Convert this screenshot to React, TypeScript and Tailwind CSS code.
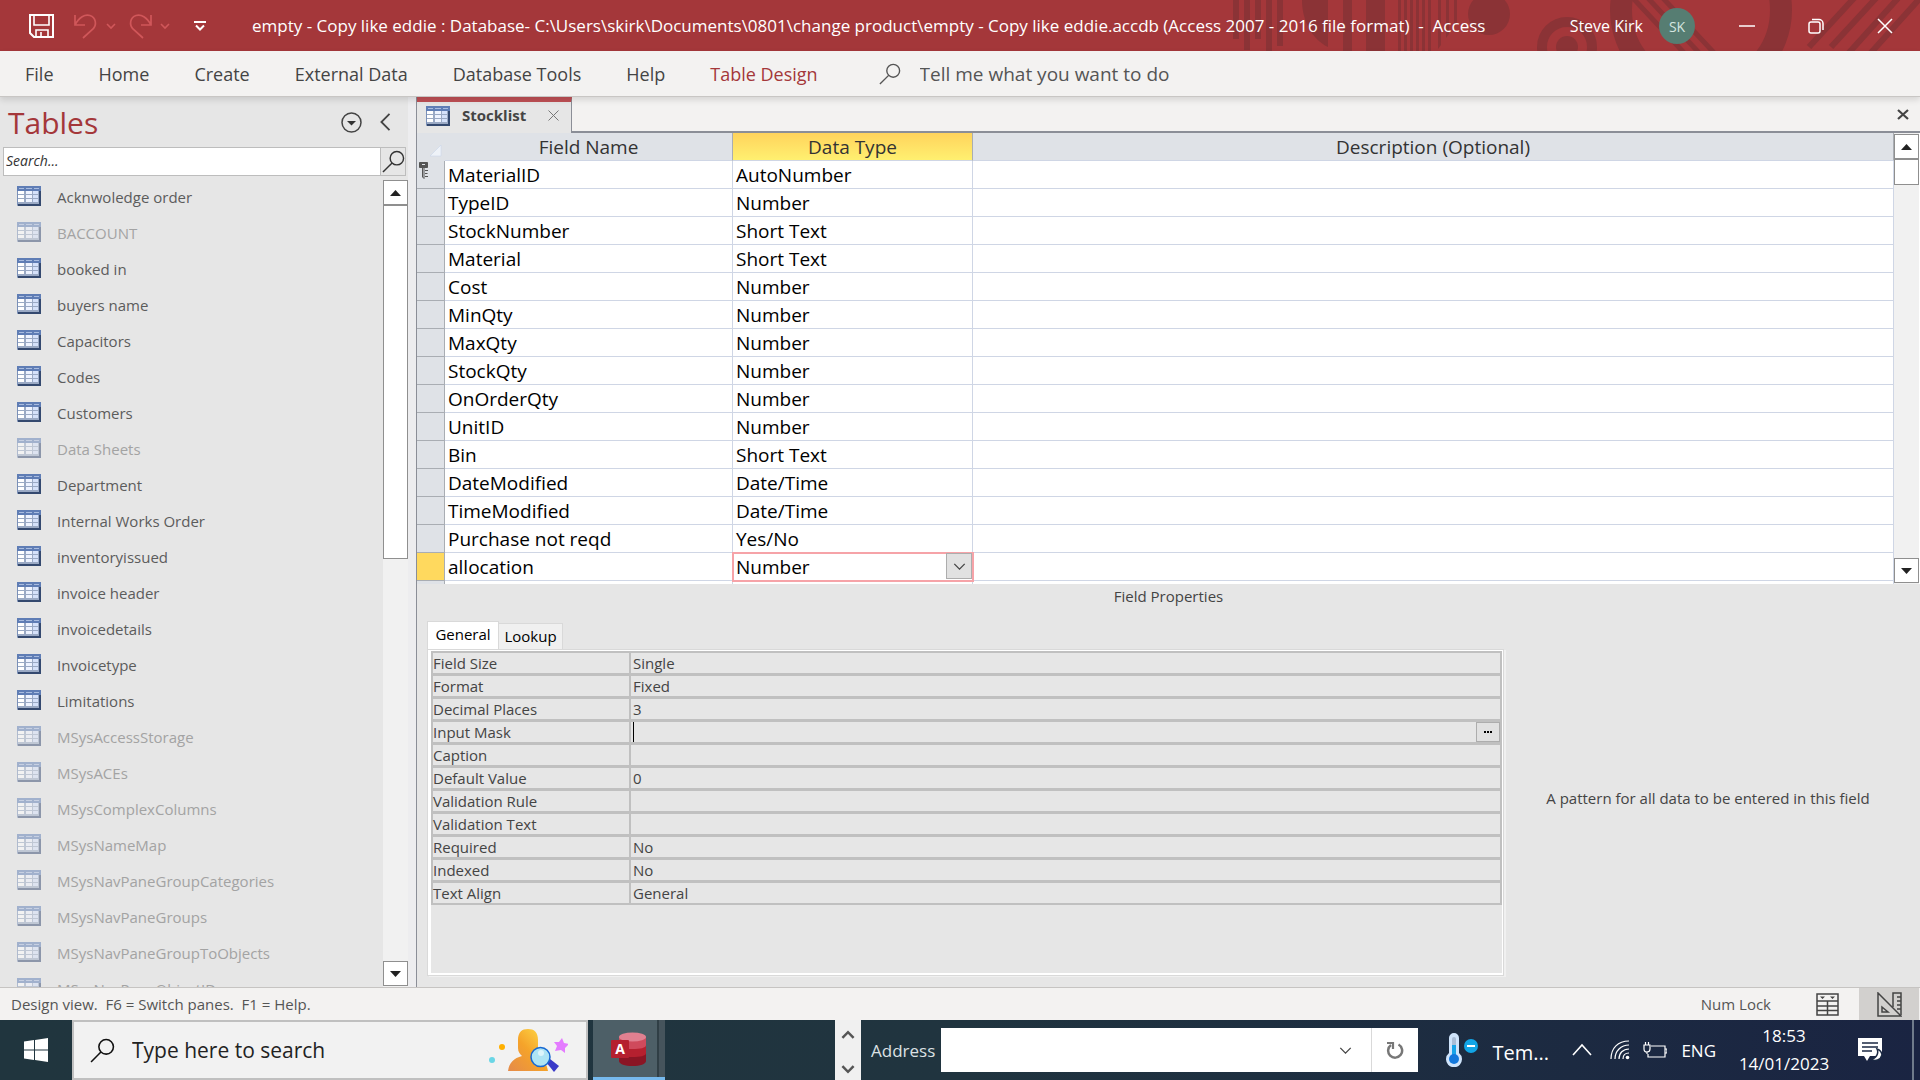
import React from 'react';

const menuItems = ['File', 'Home', 'Create', 'External Data', 'Database Tools', 'Help'];

const tables = [
  { name: 'Acknwoledge order', hidden: false },
  { name: 'BACCOUNT', hidden: true },
  { name: 'booked in', hidden: false },
  { name: 'buyers name', hidden: false },
  { name: 'Capacitors', hidden: false },
  { name: 'Codes', hidden: false },
  { name: 'Customers', hidden: false },
  { name: 'Data Sheets', hidden: true },
  { name: 'Department', hidden: false },
  { name: 'Internal Works Order', hidden: false },
  { name: 'inventoryissued', hidden: false },
  { name: 'invoice header', hidden: false },
  { name: 'invoicedetails', hidden: false },
  { name: 'Invoicetype', hidden: false },
  { name: 'Limitations', hidden: false },
  { name: 'MSysAccessStorage', hidden: true },
  { name: 'MSysACEs', hidden: true },
  { name: 'MSysComplexColumns', hidden: true },
  { name: 'MSysNameMap', hidden: true },
  { name: 'MSysNavPaneGroupCategories', hidden: true },
  { name: 'MSysNavPaneGroups', hidden: true },
  { name: 'MSysNavPaneGroupToObjects', hidden: true },
  { name: 'MSysNavPaneObjectIDs', hidden: true },
];

const fields = [
  ['MaterialID', 'AutoNumber'],
  ['TypeID', 'Number'],
  ['StockNumber', 'Short Text'],
  ['Material', 'Short Text'],
  ['Cost', 'Number'],
  ['MinQty', 'Number'],
  ['MaxQty', 'Number'],
  ['StockQty', 'Number'],
  ['OnOrderQty', 'Number'],
  ['UnitID', 'Number'],
  ['Bin', 'Short Text'],
  ['DateModified', 'Date/Time'],
  ['TimeModified', 'Date/Time'],
  ['Purchase not reqd', 'Yes/No'],
];

const properties = [
  ['Field Size', 'Single'],
  ['Format', 'Fixed'],
  ['Decimal Places', '3'],
  ['Input Mask', ''],
  ['Caption', ''],
  ['Default Value', '0'],
  ['Validation Rule', ''],
  ['Validation Text', ''],
  ['Required', 'No'],
  ['Indexed', 'No'],
  ['Text Align', 'General'],
];

const TableIcon: React.FC<{ faded?: boolean }> = ({ faded }) => (
  <svg width="24" height="20" viewBox="0 0 24 20" className={faded ? 'shrink-0 opacity-50' : 'shrink-0'} shapeRendering="crispEdges">
    <rect width="24" height="20" fill="#9aa9c4" />
    <rect width="24" height="5" fill="#5f7db5" />
    <path d="M2 2.500h5M9 2.500h6M17 2.500h5" stroke="#a9bcdf" />
    <path d="M1 6.500h6M1 10.500h6M1 14.500h6" stroke="#fff" strokeWidth="3" />
    <path d="M9 6.500h6M9 10.500h6M9 14.500h6" stroke="#eef3ff" strokeWidth="3" />
    <path d="M16 6.500h5M16 10.500h5M16 14.500h5" stroke="#d5e1fa" strokeWidth="3" />
    <path d="M23 5v15M1 19h23" stroke="#34496f" strokeWidth="2" />
    <path d="M0.500 5v14" stroke="#7a90b8" />
  </svg>
);

const Magnifier: React.FC<{ size: number; stroke: string; width?: number }> = ({ size, stroke, width = 1.5 }) => (
  <svg width={size} height={size} viewBox="0 0 24 24" fill="none" stroke={stroke} strokeWidth={width} className="shrink-0">
    <circle cx="15.500" cy="8.500" r="7" />
    <path d="M10.500 13.500 1 23" />
  </svg>
);

const Chevron: React.FC<{ size: number; stroke: string; d?: string; width?: number }> = ({
  size,
  stroke,
  d = 'M1 3l4 4 4-4',
  width = 1,
}) => (
  <svg width={size} height={size} viewBox="0 0 10 10" fill="none" stroke={stroke} strokeWidth={width} className="shrink-0">
    <path d={d} />
  </svg>
);

const ScrollButton: React.FC<{ dir: 'up' | 'down' }> = ({ dir }) => (
  <button
    type="button"
    aria-label={`Scroll ${dir}`}
    className="flex h-[25px] w-[25px] shrink-0 items-center justify-center border border-[#8f8f8f] bg-white"
  >
    <svg width="11" height="6" viewBox="0 0 11 6" fill="#222">
      <path d={dir === 'up' ? 'M5.500 0 11 6H0z' : 'M0 0h11L5.500 6z'} />
    </svg>
  </button>
);

const TitlePattern = () => (
  <svg width="690" height="51" viewBox="1230 0 690 51" className="absolute right-0 top-0" fill="none">
    <g fill="#8b3336">
      <path d="M1233 0h6v39h-6zM1244 0h6v50h-6zM1255 0h6v39h-6zM1266 0h6v51h-6zM1277 0h6v46h-6z" />
      <path d="M1302 0h26v47c-16-8-26-26-26-47zM1343 0h9v51h-9zM1366 0h19v51h-19z" />
      <path d="M1398 0h3v51h-3zM1404 0h3v51h-3zM1410 0h3v51h-3zM1416 0h3v51h-3zM1422 0h3v51h-3zM1428 0h3v51h-3zM1438 0h3v45l-3 4zM1446 0h3v34l-3 4zM1454 0h3v22l-3 6z" />
      <circle cx="1489" cy="14" r="21" />
      <circle cx="1567" cy="47" r="11" />
    </g>
    <g stroke="#8b3336">
      <circle cx="1567" cy="47" r="25" strokeWidth="10" />
      <circle cx="1701" cy="10" r="80" strokeWidth="22" />
      <path d="M1631-4l56 60M1646-4l56 60M1661-4l56 60" strokeWidth="5" />
      <path d="M1856-4l-47 51M1878-4l-47 51M1900-4l-54 60M1922-4l-54 60" strokeWidth="6" />
    </g>
  </svg>
);

const TitleBar = () => (
  <header className="relative flex h-[51px] shrink-0 items-center bg-[#a4373a] text-white">
    <TitlePattern />
    <div className="relative flex w-full items-center pt-px">
      <div className="flex w-[252px] shrink-0 items-center pl-[29px]">
        <button type="button" aria-label="Save">
          <svg width="25" height="26" viewBox="0 0 25 26" fill="none" stroke="#fff" strokeWidth="2">
            <path d="M1 2h23v22H5l-4-4z" />
            <path d="M5 2v10h15V2M7 24v-7h12v7M12 19v5" strokeWidth="1.600" />
          </svg>
        </button>
        <button type="button" aria-label="Undo" className="ml-5 flex items-center gap-2">
          <svg width="24" height="26" viewBox="0 0 24 26" fill="none" stroke="#d0575a" strokeWidth="1.700">
            <path d="M1 2v10h10M1 12C5 4 11 1 16 2.500c6 2 7 9 3 13.500L9 25" />
          </svg>
          <Chevron size={10} stroke="#d0575a" width={1.6} />
        </button>
        <button type="button" aria-label="Redo" className="ml-3 flex items-center gap-2">
          <svg width="24" height="26" viewBox="0 0 24 26" fill="none" stroke="#d0575a" strokeWidth="1.700">
            <path d="M23 2v10H13M23 12C19 4 13 1 8 2.500c-6 2-7 9-3 13.500L15 25" />
          </svg>
          <Chevron size={10} stroke="#d0575a" width={1.6} />
        </button>
        <button type="button" aria-label="Customize Quick Access Toolbar" className="ml-6">
          <svg width="12" height="10" viewBox="0 0 12 10" fill="none" stroke="#fff" strokeWidth="2">
            <path d="M0 1h12M2 4.500l4 4 4-4" />
          </svg>
        </button>
      </div>
      <h1 className="whitespace-pre text-[17px]">
        empty - Copy like eddie : Database- C:\Users\skirk\Documents\0801\change product\empty - Copy like eddie.accdb (Access 2007 - 2016 file format)  -  Access
      </h1>
      <div className="ml-auto flex items-center">
        <span className="text-[16px]">Steve Kirk</span>
        <span className="ml-4 flex h-9 w-9 items-center justify-center rounded-full bg-[#567d72] text-[14px] text-[#d5e6e0]">SK</span>
        <button type="button" aria-label="Minimize" className="ml-11">
          <svg width="16" height="16" stroke="#fff" strokeWidth="1.500"><path d="M0 8h16" /></svg>
        </button>
        <button type="button" aria-label="Restore" className="ml-[53px]">
          <svg width="16" height="16" fill="none" stroke="#fff" strokeWidth="1.500">
            <rect x="1" y="4" width="11" height="11" rx="2" />
            <path d="M4 1.500h7a4 4 0 0 1 4 4V12" />
          </svg>
        </button>
        <button type="button" aria-label="Close" className="ml-[53px] mr-[27px]">
          <svg width="16" height="16" stroke="#fff" strokeWidth="1.500"><path d="M1 1l14 14M15 1 1 15" /></svg>
        </button>
      </div>
    </div>
  </header>
);

const Ribbon = () => (
  <nav className="relative z-10 flex h-[46px] shrink-0 items-center gap-[45px] border-b border-[#c8c6c4] bg-[#f3f2f1] pl-[25px] pt-[2px] text-[18px] text-[#444] shadow-[0_3px_6px_rgba(0,0,0,0.12)]">
    {menuItems.map((item) => (
      <button type="button" key={item}>{item}</button>
    ))}
    <button type="button" className="text-[#a4373a]">Table Design</button>
    <label className="ml-4 flex items-center gap-[19px] pb-px">
      <Magnifier size={22} stroke="#555" />
      <input
        type="text"
        aria-label="Tell me what you want to do"
        placeholder="Tell me what you want to do"
        className="w-[300px] bg-transparent text-[19px] outline-none placeholder:text-[#555]"
      />
    </label>
  </nav>
);

const NavPane = () => (
  <aside className="flex w-[416px] shrink-0 flex-col bg-[#e6e6e6] pr-2 shadow-[inset_-8px_0_0_#ededef]">
    <div className="flex h-[50px] shrink-0 items-center pl-2">
      <h2 className="text-[30px] text-[#a4373a]">Tables</h2>
      <button type="button" aria-label="Choose category" className="ml-auto">
        <svg width="21" height="21" viewBox="0 0 21 21" fill="none" stroke="#444">
          <circle cx="10.500" cy="10.500" r="9.500" strokeWidth="1.500" />
          <path d="M6 9h9l-4.500 4.500z" fill="#333" stroke="none" />
        </svg>
      </button>
      <button type="button" aria-label="Collapse pane" className="ml-[14px] mr-[14px]">
        <Chevron size={18} stroke="#444" d="M7.500 0.500 3 5l4.500 4.500" />
      </button>
    </div>
    <div className="ml-[3px] mr-[2px] flex h-[29px] shrink-0 border border-[#bdbdbd]">
      <input
        type="search"
        aria-label="Search tables"
        placeholder="Search..."
        className="min-w-0 flex-1 bg-white pb-[2px] pl-[2px] text-[14px] italic outline-none placeholder:text-[#333]"
      />
      <button type="button" aria-label="Search" className="flex w-[25px] items-center justify-center border-l border-[#bdbdbd]">
        <Magnifier size={23} stroke="#333" />
      </button>
    </div>
    <div className="mt-1 flex min-h-0 flex-1 overflow-hidden">
      <ul className="min-w-0 flex-1 overflow-hidden">
        {tables.map((t) => (
          <li key={t.name} className="h-9">
            <a href="#" className={`flex h-8 items-center gap-4 pl-[17px] text-[15px] ${t.hidden ? 'text-[#a3a3a3]' : 'text-[#5c5c5c]'}`}>
              <TableIcon faded={t.hidden} />
              <span className="pt-[2px]">{t.name}</span>
            </a>
          </li>
        ))}
      </ul>
      <div className="flex w-[25px] flex-col bg-[#f1f1f1] pb-px">
        <ScrollButton dir="up" />
        <div className="h-[354px] border border-[#8f8f8f] bg-white" />
        <div className="flex-1" />
        <ScrollButton dir="down" />
      </div>
    </div>
  </aside>
);

const selectorCell = 'border-b border-r border-[#a9adb3] bg-[#dfe2e7] p-0';
const gridCell = 'h-7 border-b border-r border-[#cfd6e5] px-[3px] py-0';
const headCell = 'h-7 border-b border-r border-b-[#cfd6e5] border-r-[#a9adb3] p-0 font-normal text-[#333]';

const DesignGrid = () => (
  <div className="flex shrink-0 bg-white">
    <table className="min-w-0 flex-1 table-fixed border-separate border-spacing-0 text-[19px] leading-6 text-black">
      <colgroup>
        <col className="w-7" />
        <col className="w-[288px]" />
        <col className="w-[240px]" />
        <col />
      </colgroup>
      <thead>
        <tr className="bg-[#dfe2e7]">
          <th className="p-0">
            <svg width="12" height="12" viewBox="0 0 12 12" className="ml-[13px] mt-2"><path d="M11 0v11H0z" fill="#eef2f8" stroke="#c5d3e8" strokeWidth="0.500" /></svg>
          </th>
          <th className={headCell}>Field Name</th>
          <th className={`${headCell} bg-linear-to-b from-[#ffd35c] to-[#fff070]`}>Data Type</th>
          <th className={headCell}>Description (Optional)</th>
        </tr>
      </thead>
      <tbody>
        {fields.map(([name, type], i) => (
          <tr key={name}>
            <td className={selectorCell}>
              {i === 0 && (
                <svg width="10" height="17" viewBox="0 0 10 17" className="mb-2 ml-[2px]" fill="none" stroke="#555">
                  <path d="M0.500 0.500h8v5h-8z" fill="#555" />
                  <path d="M3 2.500h3" stroke="#dfe2e7" />
                  <path d="M3.500 6v9l1.500 1.500V6M6 8.500h3M6 11.500h2.500M6 14.500h3" />
                </svg>
              )}
            </td>
            <td className={gridCell}>{name}</td>
            <td className={gridCell}>{type}</td>
            <td className={gridCell} />
          </tr>
        ))}
        <tr>
          <td className="border-b border-r border-[#a9adb3] bg-[#ffd95e] p-0" />
          <td className={gridCell}>allocation</td>
          <td className={`${gridCell} relative outline-2 -outline-offset-1 outline-[#f6a3a8]`}>
            <select aria-label="Data type for allocation" className="block h-[26px] w-full appearance-none bg-transparent outline-none">
              <option>Number</option>
            </select>
            <span className="pointer-events-none absolute right-0 top-0 flex h-[26px] w-[26px] items-center justify-center border border-[#adadad] bg-[#e1e1e1]">
              <Chevron size={13} stroke="#444" />
            </span>
          </td>
          <td className={gridCell} />
        </tr>
        <tr className="h-[3px]">
          <td className="border-r border-[#a9adb3] bg-[#dfe2e7] p-0" />
          <td className="border-r border-[#cfd6e5] p-0" />
          <td className="border-r border-[#cfd6e5] p-0" />
          <td className="border-r border-[#cfd6e5] p-0" />
        </tr>
      </tbody>
    </table>
    <div className="mr-px flex w-[25px] shrink-0 flex-col bg-[#f1f1f1] py-px">
      <ScrollButton dir="up" />
      <div className="h-[26px] border border-[#8f8f8f] bg-white" />
      <div className="flex-1" />
      <ScrollButton dir="down" />
    </div>
  </div>
);

const FieldProperties = () => (
  <section className="flex min-h-0 flex-1 flex-col bg-[#e6e6e6] text-[15px] text-[#444]">
    <h3 className="h-[37px] text-center leading-6">Field Properties</h3>
    <div className="flex min-h-0 flex-1 pb-[11px] pl-[10px]">
      <div className="flex min-w-0 flex-1 flex-col">
        <div role="tablist" className="flex h-7 items-end text-black">
          <button type="button" role="tab" aria-selected="true" className="h-7 w-[72px] border-x border-t border-[#d9d9d9] bg-white pb-[2px]">General</button>
          <button type="button" role="tab" aria-selected="false" className="h-[26px] w-16 border-r border-t border-[#d9d9d9] bg-[#f0f0f0]">Lookup</button>
        </div>
        <div className="flex-1 border border-[#d9d9d9] bg-white pb-[2px] pl-[3px] pr-px pt-px shadow-[2px_1px_0_#f0f0f0]">
          <div className="h-full bg-[#e6e6e6]">
            <div className="grid grid-cols-[196px_1fr] gap-x-[2px] gap-y-[3px] bg-[#c0c0c0] p-[2px]">
              {properties.map(([label, value]) => (
                <React.Fragment key={label}>
                  <label htmlFor={label} className="h-5 bg-[#e6e6e6] leading-5">{label}</label>
                  <div className="flex h-5 bg-[#e6e6e6] pl-[2px]">
                    <input
                      id={label}
                      defaultValue={value}
                      className={`min-w-0 flex-1 bg-transparent outline-none ${label === 'Input Mask' ? 'border-l border-black' : ''}`}
                    />
                    {label === 'Input Mask' && (
                      <button type="button" aria-label="Build" className="flex w-6 items-center justify-center border border-[#adadad] bg-[#e1e1e1]">
                        <svg width="8" height="2" fill="#000"><path d="M0 0h2v2H0zM3 0h2v2H3zM6 0h2v2H6z" /></svg>
                      </button>
                    )}
                  </div>
                </React.Fragment>
              ))}
            </div>
          </div>
        </div>
      </div>
      <p className="flex w-[416px] items-center justify-center pr-2">A pattern for all data to be entered in this field</p>
    </div>
  </section>
);

const Workspace = () => (
  <main className="flex min-w-0 flex-1 flex-col border-l border-[#8b8e97] bg-[#f3f2f1]">
    <div className="flex h-9 shrink-0 border-b-2 border-[#8b8e97]">
      <div className="-mb-[2px] flex w-[155px] items-center border-r border-t-[5px] border-r-[#8b8e97] border-t-[#bf5055] bg-[#e6e6e6] pb-1 pl-[9px]">
        <TableIcon />
        <span className="ml-3 text-[15px] font-bold text-[#444]">Stocklist</span>
        <button type="button" aria-label="Close tab" className="ml-auto mr-3">
          <svg width="11" height="11" stroke="#777"><path d="M0.500 0.500l10 10M10.500 0.500l-10 10" /></svg>
        </button>
      </div>
      <button type="button" aria-label="Close object" className="ml-auto mr-[11px]">
        <svg width="12" height="11" stroke="#444" strokeWidth="2.200"><path d="M1 1l10 9M11 1 1 10" /></svg>
      </button>
    </div>
    <DesignGrid />
    <FieldProperties />
  </main>
);

const StatusBar = () => (
  <footer className="flex h-[33px] shrink-0 items-center border-t border-[#c6c4c2] bg-[#f3f2f1] pl-[11px] text-[15px] text-[#555]">
    <span className="whitespace-pre">Design view.  F6 = Switch panes.  F1 = Help.</span>
    <span className="ml-auto">Num Lock</span>
    <button type="button" aria-label="Datasheet view" className="ml-[45px]">
      <svg width="23" height="23" viewBox="0 0 23 23" fill="none" stroke="#444" strokeWidth="1.500">
        <path d="M1 1h21v21H1zM1 8h21M1 13h21M1 17.500h21M11.500 8v14" />
        <path d="M4 3.500h5L6.500 6zM14 3.500h5L16.500 6z" fill="#444" stroke="none" />
      </svg>
    </button>
    <button type="button" aria-label="Design view" className="ml-5 mr-px flex h-8 w-[60px] items-center justify-center bg-[#d2d0ce]">
      <svg width="25" height="25" viewBox="0 0 25 25" fill="none" stroke="#444" strokeWidth="1.500">
        <path d="M1 1v23h23zM5 15v5h6z" />
        <path d="M16 15V1h8v22M20 5h4M20 9h4M20 13h4M20 17h4" />
      </svg>
    </button>
  </footer>
);

const SearchArt = () => (
  <svg width="80" height="44" viewBox="0 0 80 44" className="ml-auto mr-[18px]">
    <defs>
      <linearGradient id="person" x1="0" y1="1" x2="1" y2="0">
        <stop offset="0" stopColor="#e58a4a" />
        <stop offset="0.500" stopColor="#f5a32a" />
        <stop offset="1" stopColor="#ffe04a" />
      </linearGradient>
    </defs>
    <circle cx="14" cy="19" r="3" fill="#ffb000" />
    <circle cx="4" cy="32" r="3" fill="#6ad6e6" />
    <path d="M30 12C30 4 34 1 40 1s10 3 10 11v8c0 4-1 6-3 8 8 2 12 8 13 15H20c1-8 6-13 14-15-2-2-4-4-4-8z" fill="url(#person)" />
    <path d="M58 34l4-3 9 7-5 6z" fill="#3a3ac8" />
    <circle cx="52.500" cy="29" r="9.500" fill="#aee4f4" stroke="#1769d2" strokeWidth="1.500" />
    <circle cx="53" cy="25" r="3" fill="#dcf5fb" />
    <path d="M74 10l2 5 5 1-4 4 0 5-4-3-6 1 2-5-3-4 5 0z" fill="#e47cff" />
  </svg>
);

const AccessLogo = () => (
  <svg width="36" height="34" viewBox="0 0 36 34">
    <path d="M8 5v24c0 3 6 5 13.500 5S35 32 35 29V5z" fill="#8a1524" />
    <path d="M8 5v16c0 3 6 4 13.500 4S35 24 35 21V5z" fill="#b5202f" />
    <path d="M8 5v8c0 3 6 4 13.500 4S35 16 35 13V5z" fill="#cf4a5c" />
    <ellipse cx="21.500" cy="5" rx="13.500" ry="4.500" fill="#e08090" />
    <rect y="8" width="18" height="18" rx="1" fill="#b5202f" />
    <text x="9" y="22" textAnchor="middle" fontSize="14" fontWeight="700" fill="#fff" fontFamily="Open Sans, sans-serif">A</text>
  </svg>
);

const Taskbar = () => (
  <footer className="flex h-[60px] shrink-0 bg-linear-to-r from-[#20353e] via-[#20343f] to-[#1a2442] text-white">
    <button type="button" aria-label="Start" className="flex w-[72px] shrink-0 items-center justify-center">
      <svg width="24" height="24" viewBox="0 0 24 24" fill="#fff">
        <path d="M0 3.500l10-1.400v9.400H0zM11 2l13-2v11.500H11zM0 12.500h10v9.400L0 20.500zM11 12.500h13V24l-13-2z" />
      </svg>
    </button>
    <label className="flex w-[516px] shrink-0 items-center border-2 border-[#c0c0c0] bg-[#f2f2f2] pl-4">
      <Magnifier size={25} stroke="#111" />
      <input
        type="text"
        aria-label="Type here to search"
        placeholder="Type here to search"
        className="ml-[17px] w-[260px] bg-transparent pt-[2px] text-[21px] outline-none placeholder:text-[#222]"
      />
      <SearchArt />
    </label>
    <button
      type="button"
      aria-label="Access"
      className="ml-[5px] flex w-[72px] shrink-0 items-center justify-center border-b-[3px] border-[#76b9ed] bg-[#4d5f67] shadow-[inset_-6px_0_0_#46545c,inset_-8px_0_0_#303f46]"
    >
      <AccessLogo />
    </button>
    <div className="flex min-w-0 flex-1 pl-[170px]">
      <div className="flex w-[26px] shrink-0 flex-col items-center justify-between bg-[#f0f0f0] pb-1 pt-2">
        <button type="button" aria-label="Previous toolbar"><Chevron size={14} stroke="#555" width={1.8} d="M1 7l4-4 4 4" /></button>
        <button type="button" aria-label="Next toolbar"><Chevron size={14} stroke="#555" width={1.8} /></button>
      </div>
      <label htmlFor="address" className="self-center pl-[10px] pr-[6px] pt-px text-[17px] text-[#dce1e4]">Address</label>
      <div className="my-2 flex min-w-0 flex-1 bg-white">
        <input id="address" type="text" className="min-w-0 flex-1 px-2 text-black outline-none" />
        <button type="button" aria-label="Previous locations" className="flex w-[51px] items-center justify-center">
          <Chevron size={13} stroke="#444" />
        </button>
        <button type="button" aria-label="Refresh" className="flex w-[47px] items-center justify-center border-l border-[#d9d9d9]">
          <svg width="18" height="19" viewBox="0 0 18 19" fill="none" stroke="#777" strokeWidth="2.500">
            <path d="M12.500 3.500a7 7 0 1 1-7.500 0.500" />
            <path d="M1 2h6v6" strokeWidth="2.200" />
          </svg>
        </button>
      </div>
    </div>
    <div className="flex shrink-0 items-center pl-7">
      <svg width="32" height="34" viewBox="0 0 32 34">
        <path d="M3 5a5 5 0 0 1 10 0v15a8 8 0 1 1-10 0z" fill="#cfe4fb" />
        <path d="M6 6a2 2 0 0 1 4 0v15H6z" fill="#a9bdd6" />
        <path d="M6 12h4v10H6z" fill="#18a4e8" />
        <circle cx="8" cy="26" r="5" fill="#1378dc" />
        <circle cx="25" cy="13" r="7" fill="#12a5e6" />
        <path d="M21 13h8" stroke="#fff" strokeWidth="2" />
      </svg>
      <span className="ml-[14px] w-14 pt-[6px] text-[20px]">Tem...</span>
      <button type="button" aria-label="Show hidden icons" className="ml-6">
        <Chevron size={20} stroke="#fff" width={0.8} d="M0.500 7.500l4.500-5 4.500 5" />
      </button>
      <svg width="20" height="20" viewBox="0 0 20 20" fill="none" stroke="#fff" className="ml-[18px]" strokeWidth="1.200">
        <path d="M1 19C1 8 8 1 19 1M5 19C5 11 11 5 19 5M9 19c0-6 4-10 10-10M13 19c0-4 2-6 6-6" />
        <circle cx="17.500" cy="17.500" r="1.800" fill="#fff" stroke="none" />
      </svg>
      <svg width="24" height="17" viewBox="0 0 24 17" fill="none" stroke="#fff" className="ml-[13px]" strokeWidth="1.200">
        <path d="M8 4h14v11H5v-3M22 7h2v4h-2M1 3h6v4c0 2-1 3-3 3S1 9 1 7zM2.500 0v3M5.500 0v3M4 10v2" />
      </svg>
      <span className="ml-[14px] pt-px text-[17px]">ENG</span>
      <time className="ml-5 w-[96px] text-center text-[17px] leading-7">
        18:53
        <br />
        14/01/2023
      </time>
      <button type="button" aria-label="Notifications" className="ml-[26px]">
        <svg width="25" height="24" viewBox="0 0 25 24">
          <path d="M0 0h24v18H12l-3 5-3-5H0z" fill="#fff" />
          <path d="M4 5h16M4 9h16M4 13h10" stroke="#1b2943" strokeWidth="1.300" />
          <path d="M19 11a7 7 0 0 1-6 10 7 7 0 0 0 11-4 7 7 0 0 0-5-6z" fill="#fff" stroke="#1b2943" strokeWidth="1.500" />
        </svg>
      </button>
      <div className="ml-[29px] mr-[6px] h-full w-[2px] bg-[#6f7b8b]" />
    </div>
  </footer>
);

const App: React.FC = () => (
  <div className="flex h-screen flex-col overflow-hidden font-['Open_Sans','Noto_Sans',sans-serif]">
    <TitleBar />
    <Ribbon />
    <div className="flex min-h-0 flex-1">
      <NavPane />
      <Workspace />
    </div>
    <StatusBar />
    <Taskbar />
  </div>
);

export default App;
